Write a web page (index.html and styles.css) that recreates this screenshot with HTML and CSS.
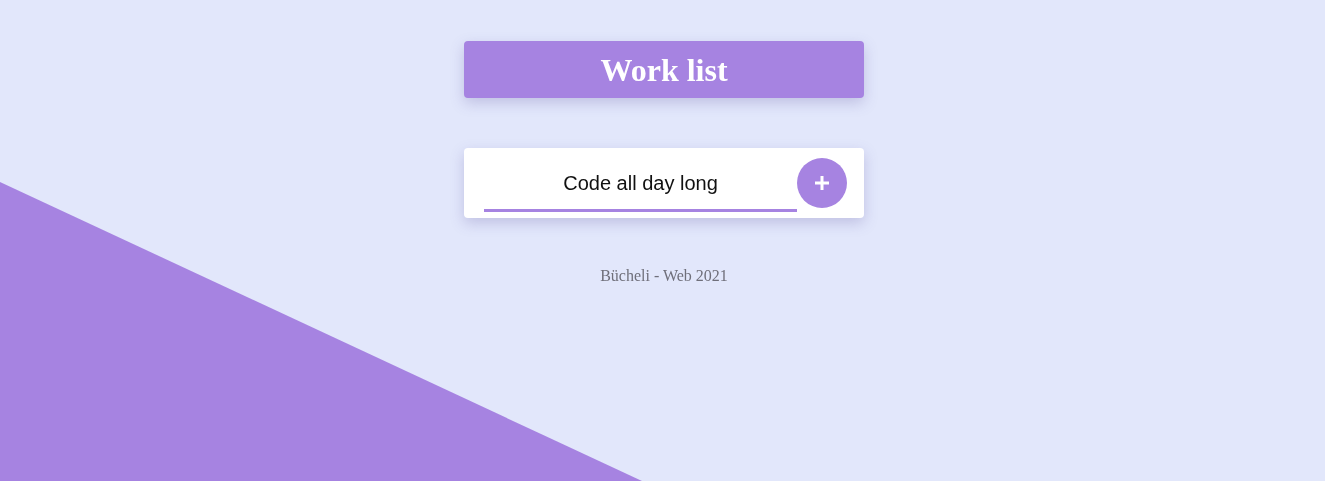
FILE: index.html
```html
<!DOCTYPE html>
<html lang="en">
<head>
<meta charset="utf-8">
<title>Work list</title>
<link rel="stylesheet" href="styles.css">
</head>
<body>
<div class="page">
  <header class="title-box">
    <h1 class="title">Work list</h1>
  </header>
  <form class="todo-card">
    <input class="todo-input" type="text" value="Code all day long">
    <button class="add-btn" type="button" aria-label="Add">
      <svg width="18" height="18" viewBox="0 0 18 18"><path d="M9 2v14M2 9h14" stroke="#fff" stroke-width="3" stroke-linecap="butt"/></svg>
    </button>
  </form>
  <footer class="footer">Bücheli - Web 2021</footer>
</div>
</body>
</html>
```
FILE: styles.css
```css
html, body {
  margin: 0;
  padding: 0;
  height: 100%;
}
body {
  background: #e2e7fb;
  font-family: "Liberation Serif", "Times New Roman", serif;
  overflow: hidden;
}
body::before {
  content: "";
  position: fixed;
  inset: 0;
  background: #a683e1;
  clip-path: polygon(0 182px, 642px 100%, 0 100%);
  z-index: 0;
}
.page {
  position: relative;
  z-index: 1;
  display: flex;
  flex-direction: column;
  align-items: center;
  padding-top: 41px;
  padding-left: 3px;
}
.title-box {
  width: 400px;
  height: 57px;
  background: #a683e1;
  border-radius: 4px;
  box-shadow: 0 5px 14px rgba(90, 80, 160, 0.25);
  display: flex;
  align-items: center;
  justify-content: center;
}
.title {
  margin: 0;
  color: #fff;
  font-size: 32px;
  font-weight: bold;
  line-height: 1;
}
.todo-card {
  margin: 50px 0 0;
  width: 400px;
  height: 70px;
  box-sizing: border-box;
  background: #fff;
  border-radius: 4px;
  box-shadow: 0 5px 14px rgba(90, 80, 160, 0.25);
  display: flex;
  align-items: center;
  padding: 0 17px 0 20px;
}
.todo-input {
  flex: 1;
  min-width: 0;
  height: 42px;
  margin-top: 22px;
  border: none;
  border-bottom: 3px solid #a683e1;
  outline: none;
  background: transparent;
  text-align: center;
  font-family: "Liberation Sans", Arial, sans-serif;
  font-size: 20px;
  color: #111;
  padding: 0 0 12px;
  box-sizing: border-box;
  align-self: flex-start;
}
.add-btn {
  width: 50px;
  height: 50px;
  border-radius: 50%;
  border: none;
  background: #a683e1;
  display: flex;
  align-items: center;
  justify-content: center;
  padding: 0;
}
.footer {
  margin-top: 49px;
  color: #6f6f7a;
  font-size: 16px;
}
```
